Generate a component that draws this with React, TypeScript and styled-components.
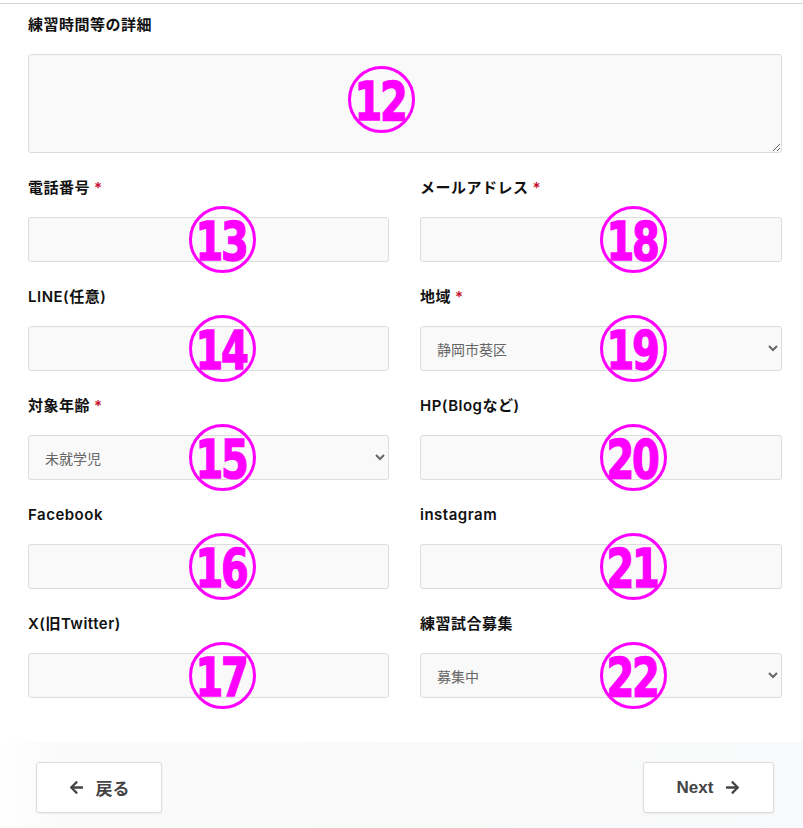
import React from 'react';
import styled, { createGlobalStyle } from 'styled-components';
import { FaArrowLeft, FaArrowRight } from 'react-icons/fa';

const GlobalStyle = createGlobalStyle`
  html, body { margin: 0; padding: 0; background: #fff; }
  body { font-family: "Inter", "Noto Sans CJK JP", sans-serif; color: #111; }
`;

const Page = styled.div`
  width: 803px;
  padding-top: 3px;
`;

const TopRule = styled.div`
  border-top: 1px solid #d4d4d4;
`;

const FormBody = styled.div`
  padding: 11px 21px 0 28px;
`;

const FieldGrid = styled.div`
  display: grid;
  grid-template-columns: 361px 362px;
  column-gap: 31px;
`;

const Field = styled.div<{ $full?: boolean }>`
  position: relative;
  grid-column: ${p => (p.$full ? '1 / -1' : 'auto')};
  padding-bottom: 25px;
`;

const Label = styled.label`
  display: block;
  height: 20px;
  line-height: 20px;
  font-size: 15px;
  font-weight: 600;
  color: #111;
  margin-bottom: 19px;
  letter-spacing: 0.5px;
`;

const Required = styled.span`
  color: #c8102e;
  margin-left: 4px;
`;

const fieldBase = `
  box-sizing: border-box;
  width: 100%;
  background: #f9f9f9;
  border: 1px solid #dcdcdc;
  border-radius: 3px;
  font-family: "Noto Sans CJK JP", sans-serif;
  font-size: 14px;
  color: #666;
  outline: none;
`;

const TextArea = styled.textarea`
  ${fieldBase}
  display: block;
  height: 99px;
  resize: vertical;
`;

const TextInput = styled.input`
  ${fieldBase}
  display: block;
  height: 45px;
  padding: 0 14px;
`;

const Select = styled.select`
  ${fieldBase}
  display: block;
  height: 45px;
  padding: 0 12px;
`;

// magenta circled numbers laid over the form as annotations
const Marker = styled.div<{ $x: number; $y: number }>`
  position: absolute;
  left: ${p => p.$x}px;
  top: ${p => p.$y}px;
  width: 61px;
  height: 61px;
  border: 3px solid #f0f;
  border-radius: 50%;
  display: flex;
  align-items: center;
  justify-content: center;
  pointer-events: none;
`;

const MarkerDigits = styled.span`
  display: block;
  color: #f0f;
  font-family: "DejaVu Sans", "Liberation Sans", sans-serif;
  font-weight: 700;
  font-size: 54px;
  line-height: 1;
  letter-spacing: -3px;
  -webkit-text-stroke: 1.5px #f0f;
  transform: scaleX(0.74) translate(-2px, 2px);
`;

const Footer = styled.div`
  margin-top: 19px;
  height: 86px;
  background: linear-gradient(to right, #fff 0, #fafafa 60px, #f8f9fa 100%);
  display: flex;
  justify-content: space-between;
  align-items: flex-start;
  padding: 20px 29px 0 36px;
`;

const NavButton = styled.button<{ $w: number }>`
  box-sizing: border-box;
  width: ${p => p.$w}px;
  height: 51px;
  background: #fff;
  border: 1px solid #dcdcdc;
  border-radius: 3px;
  box-shadow: 0 1px 2px rgba(0, 0, 0, 0.06);
  display: flex;
  align-items: center;
  justify-content: center;
  gap: 12px;
  font-family: "Liberation Sans", "Noto Sans CJK JP", sans-serif;
  font-weight: 700;
  font-size: 17px;
  color: #444;
  cursor: pointer;
  svg { font-size: 15px; }
`;

type FieldDef = {
  label: string;
  required?: boolean;
  kind: 'input' | 'select';
  value?: string;
  mark: string;
  side: 'l' | 'r';
};

const fields: FieldDef[] = [
  { label: '電話番号', required: true, kind: 'input', mark: '13', side: 'l' },
  { label: 'メールアドレス', required: true, kind: 'input', mark: '18', side: 'r' },
  { label: 'LINE(任意)', kind: 'input', mark: '14', side: 'l' },
  { label: '地域', required: true, kind: 'select', value: '静岡市葵区', mark: '19', side: 'r' },
  { label: '対象年齢', required: true, kind: 'select', value: '未就学児', mark: '15', side: 'l' },
  { label: 'HP(Blogなど)', kind: 'input', mark: '20', side: 'r' },
  { label: 'Facebook', kind: 'input', mark: '16', side: 'l' },
  { label: 'instagram', kind: 'input', mark: '21', side: 'r' },
  { label: 'X(旧Twitter)', kind: 'input', mark: '17', side: 'l' },
  { label: '練習試合募集', kind: 'select', value: '募集中', mark: '22', side: 'r' },
];

export default function App() {
  return (
    <Page>
      <GlobalStyle />
      <TopRule />
      <FormBody>
        <FieldGrid>
          <Field $full>
            <Label>練習時間等の詳細</Label>
            <TextArea />
            <Marker $x={320} $y={51}><MarkerDigits>12</MarkerDigits></Marker>
          </Field>
          {fields.map(f => (
            <Field key={f.label}>
              <Label>
                {f.label}
                {f.required && <Required>*</Required>}
              </Label>
              {f.kind === 'select' ? (
                <Select defaultValue={f.value}>
                  <option>{f.value}</option>
                </Select>
              ) : (
                <TextInput />
              )}
              <Marker $x={f.side === 'l' ? 161 : 180} $y={28}>
                <MarkerDigits>{f.mark}</MarkerDigits>
              </Marker>
            </Field>
          ))}
        </FieldGrid>
      </FormBody>
      <Footer>
        <NavButton $w={126}>
          <FaArrowLeft />
          戻る
        </NavButton>
        <NavButton $w={131}>
          Next
          <FaArrowRight />
        </NavButton>
      </Footer>
    </Page>
  );
}
